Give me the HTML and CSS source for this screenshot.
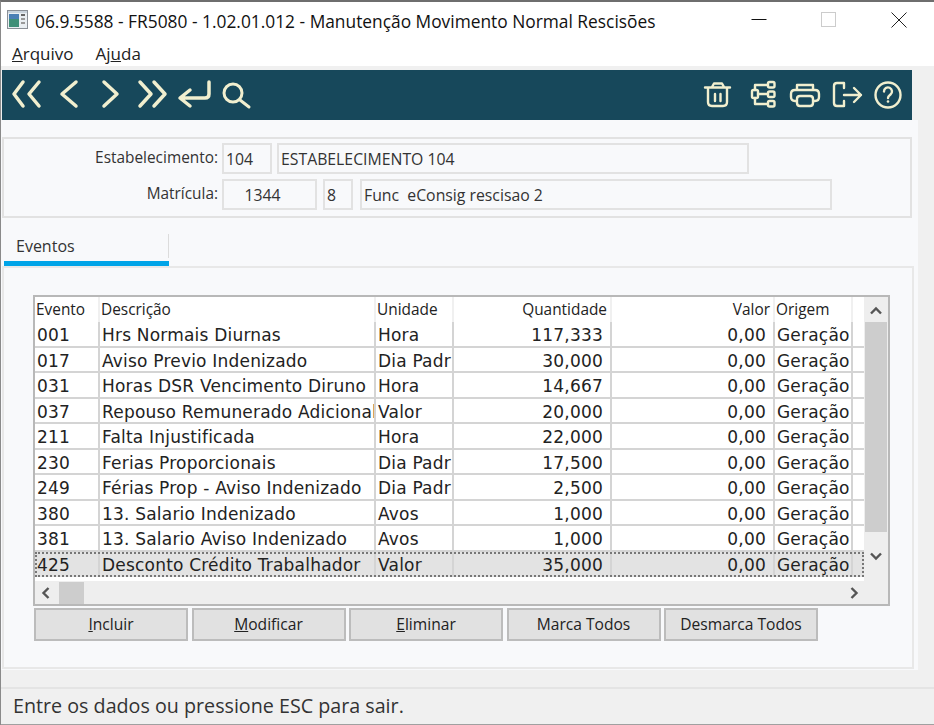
FILE: index.html
```html
<!DOCTYPE html>
<html lang="pt-BR">
<head>
<meta charset="utf-8">
<title>FR5080</title>
<link rel="stylesheet" href="styles.css">
</head>
<body>
<div class="window">
  <header class="titlebar">
    <svg class="app-icon" width="22" height="20" viewBox="0 0 22 20"><rect x="0.5" y="0.5" width="20" height="18" fill="#e9eef2" stroke="#8a8f96"/><rect x="1" y="1" width="19" height="2" fill="#c9d3dc"/><rect x="2" y="4" width="10" height="13" fill="#3f8f78"/><rect x="2" y="4" width="10" height="5" fill="#4a7fb5"/><rect x="14" y="4" width="4" height="2" fill="#666"/><rect x="14" y="8" width="4" height="2" fill="#999"/><rect x="14" y="12" width="4" height="2" fill="#999"/></svg>
    <span class="title">06.9.5588 - FR5080 - 1.02.01.012 - Manutenção Movimento Normal Rescisões</span>
    <div class="win-controls">
      <svg class="win-btn" width="16" height="16" viewBox="0 0 16 16"><path d="M0.5 7.5H15.5" stroke="#111"/></svg>
      <svg class="win-btn" width="16" height="16" viewBox="0 0 16 16"><rect x="0.5" y="0.5" width="14" height="14" fill="none" stroke="#ccc"/></svg>
      <svg class="win-btn" width="16" height="16" viewBox="0 0 16 16"><path d="M0.5 0.5L15.5 15.5M15.5 0.5L0.5 15.5" stroke="#222"/></svg>
    </div>
  </header>
  <nav class="menubar">
    <span class="menu-item"><u>A</u>rquivo</span>
    <span class="menu-item">Aj<u>u</u>da</span>
  </nav>
  <div class="toolbar">
    <div class="tool-group">
      <svg class="tool" viewBox="0 0 42 50"><path d="M17 12L8 24L17 36M33 12L23 24L33 36"/></svg>
      <svg class="tool" viewBox="0 0 42 50"><path d="M28 12L14 24L28 36"/></svg>
      <svg class="tool" viewBox="0 0 42 50"><path d="M14 12L27 24L14 36"/></svg>
      <svg class="tool" viewBox="0 0 42 50"><path d="M8 12L19 24L8 36M22 12L33 24L22 36"/></svg>
      <svg class="tool" viewBox="0 0 42 50"><path d="M35 12V24Q35 28 31 28H7M16 20L6 28L16 36"/></svg>
      <svg class="tool tool-search" viewBox="0 0 42 50"><circle cx="17" cy="23" r="9"/><path d="M24 30L33 37"/></svg>
    </div>
    <div class="tool-group">
      <svg class="tool tool-first" viewBox="0 0 42 50"><path class="thin" d="M9 17.5H34M16 17L18 13.5H26L28 17M12 18V32Q12 36 16 36H27Q31 36 31 32V18M19 24V31M24.500 24V31"/></svg>
      <svg class="tool" viewBox="0 0 42 50"><path class="thin" d="M13 20V15H26M16 24H26M13 28V34H26"/><rect class="thin" x="10" y="20" width="6" height="8" rx="1.500"/><rect class="thin" x="26" y="12" width="6.500" height="5.500" rx="1.500"/><rect class="thin" x="26" y="21.500" width="6.500" height="5.500" rx="1.500"/><rect class="thin" x="26" y="31" width="6.500" height="5.500" rx="1.500"/></svg>
      <svg class="tool" viewBox="0 0 42 50"><path class="thin" d="M13 20V15H29V20M13 31H11Q7 31 7 27V24Q7 20 11 20H31Q35 20 35 24V27Q35 31 31 31H29M13 29Q13 26 16 26H26Q29 26 29 29V33Q29 36 26 36H16Q13 36 13 33Z"/></svg>
      <svg class="tool" viewBox="0 0 42 50"><path class="thin" d="M18 18V13H11Q8 13 8 16V33Q8 36 11 36H18V31M18 25H35M28 18L35 25L28 32"/></svg>
      <svg class="tool" viewBox="0 0 42 50"><circle class="thin" cx="20" cy="25" r="12.500"/><path class="thin" d="M16 21.500A4 4 0 1 1 22.500 24.500C21 25.700 20 26.200 20 28"/><circle class="dot" cx="20" cy="31.500" r="1.300"/></svg>
    </div>
  </div>
  <main class="main">
    <section class="frame">
      <div class="field-row">
        <label class="field-label">Estabelecimento:</label>
        <div class="field f-estab">104</div>
        <div class="field f-estab-name">ESTABELECIMENTO 104</div>
      </div>
      <div class="field-row">
        <label class="field-label">Matrícula:</label>
        <div class="field f-mat">1344</div>
        <div class="field f-dig">8</div>
        <div class="field f-name">Func  eConsig rescisao 2</div>
      </div>
    </section>
    <div class="tabs"><div class="tab">Eventos</div></div>
    <section class="panel">
      <div class="grid">
        <div class="grid-body">
          <div class="row head">
            <div>Evento</div><div>Descrição</div><div>Unidade</div><div class="num">Quantidade</div><div class="num">Valor</div><div>Origem</div>
          </div>
          <div class="row"><div>001</div><div>Hrs Normais Diurnas</div><div>Hora</div><div class="num">117,333</div><div class="num">0,00</div><div>Geração</div></div>
          <div class="row"><div>017</div><div>Aviso Previo Indenizado</div><div>Dia Padr</div><div class="num">30,000</div><div class="num">0,00</div><div>Geração</div></div>
          <div class="row"><div>031</div><div>Horas DSR Vencimento Diruno</div><div>Hora</div><div class="num">14,667</div><div class="num">0,00</div><div>Geração</div></div>
          <div class="row"><div>037</div><div>Repouso Remunerado Adicional</div><div>Valor</div><div class="num">20,000</div><div class="num">0,00</div><div>Geração</div></div>
          <div class="row"><div>211</div><div>Falta Injustificada</div><div>Hora</div><div class="num">22,000</div><div class="num">0,00</div><div>Geração</div></div>
          <div class="row"><div>230</div><div>Ferias Proporcionais</div><div>Dia Padr</div><div class="num">17,500</div><div class="num">0,00</div><div>Geração</div></div>
          <div class="row"><div>249</div><div>Férias Prop - Aviso Indenizado</div><div>Dia Padr</div><div class="num">2,500</div><div class="num">0,00</div><div>Geração</div></div>
          <div class="row"><div>380</div><div>13. Salario Indenizado</div><div>Avos</div><div class="num">1,000</div><div class="num">0,00</div><div>Geração</div></div>
          <div class="row"><div>381</div><div>13. Salario Aviso Indenizado</div><div>Avos</div><div class="num">1,000</div><div class="num">0,00</div><div>Geração</div></div>
          <div class="row selected"><div>425</div><div>Desconto Crédito Trabalhador</div><div>Valor</div><div class="num">35,000</div><div class="num">0,00</div><div>Geração</div></div>
        </div>
        <div class="vscroll">
          <svg class="arrow" width="14" height="10" viewBox="0 0 14 10"><path d="M2 7.500L7 2.500L12 7.500"/></svg>
          <div class="vthumb-track"><div class="vthumb"></div></div>
          <svg class="arrow" width="14" height="10" viewBox="0 0 14 10"><path d="M2 2.500L7 7.500L12 2.500"/></svg>
        </div>
        <div class="hscroll">
          <svg class="arrow" width="10" height="14" viewBox="0 0 10 14"><path d="M7.500 2L2.500 7L7.500 12"/></svg>
          <div class="hthumb"></div>
          <svg class="arrow arrow-right" width="10" height="14" viewBox="0 0 10 14"><path d="M2.500 2L7.500 7L2.500 12"/></svg>
        </div>
        <div class="corner"></div>
      </div>
      <div class="buttons">
        <button class="btn"><u>I</u>ncluir</button>
        <button class="btn"><u>M</u>odificar</button>
        <button class="btn"><u>E</u>liminar</button>
        <button class="btn">Marca Todos</button>
        <button class="btn">Desmarca Todos</button>
      </div>
    </section>
  </main>
  <footer class="statusbar">Entre os dados ou pressione ESC para sair.</footer>
</div>
</body>
</html>
```
FILE: styles.css
```css
* { box-sizing: border-box; }
html, body { margin: 0; height: 100%; }
body { background: #f0f0f0; overflow: hidden; font-family: "Open Sans", "Noto Sans", sans-serif; color: #222; }
.window { width: 934px; height: 725px; display: flex; flex-direction: column; border-top: 2px solid #6e6e6e; border-left: 1px solid #8a8a8a; }

.titlebar { height: 35px; flex: none; background: #fff; display: flex; align-items: center; padding-left: 6px; }
.app-icon { flex: none; margin-right: 6px; }
.title { font-size: 17.350px; padding-top: 2px; color: #111; white-space: nowrap; }
.win-controls { margin-left: auto; display: flex; margin-right: 27px; gap: 54px; }
.menubar { height: 29px; flex: none; background: #fff; display: flex; align-items: center; padding: 3px 0 0 11px; gap: 22px; font-size: 17px; color: #222; }

.toolbar { flex: none; height: 50px; width: 910px; margin: 4px 0 0 1px; background: #17485b; display: flex; justify-content: space-between; padding: 0 2px 0 4px; }
.tool-group { display: flex; }
.tool { width: 42px; height: 50px; fill: none; stroke: #f1efcf; stroke-width: 3.500; stroke-linecap: round; stroke-linejoin: round; flex: none; }
.tool-search { stroke-width: 3; }
.tool-first { margin-right: 4px; }
.tool .thin { stroke-width: 2.400; }
.tool .dot { fill: #f1efcf; stroke: none; }

.main { width: 917px; height: 550px; flex: none; background: #f8f9fb; padding: 17px 0 0 1px; }
.frame { width: 910px; height: 81px; border: 2px solid #e2e2e2; padding: 4px 0 0 0; display: flex; flex-direction: column; gap: 5px; }
.field-row { display: flex; height: 31px; font-size: 15.400px; }
.field-label { width: 214px; padding-top: 4px; text-align: right; margin-right: 4px; color: #333; }
.field { border: 2px solid #e2e2e2; display: flex; align-items: center; padding: 0 2px; margin-right: 5px; color: #333; white-space: pre; font-size: 15.800px; }
.f-estab { width: 50px; }
.f-estab-name { width: 472px; }
.f-mat { width: 95px; justify-content: center; padding-right: 16px; margin-right: 6px; }
.f-dig { width: 30px; margin-right: 7px; }
.f-name { width: 472px; }

.tabs { height: 48px; display: flex; align-items: flex-end; padding-left: 2px; }
.tab { width: 165px; height: 32px; border-bottom: 5px solid #00a4e8; font-size: 16px; padding: 1px 0 0 12px; position: relative; color: #333; }
.tab::after { content: ""; position: absolute; right: 0; top: 0; width: 1px; height: 24px; background: #dcdcdc; }

.panel { width: 912px; height: 403px; border: 2px solid #e8e8e8; padding: 27px 0 0 29px; }
.grid { width: 857px; height: 311px; border: 2px solid #b8b8b8; display: grid; grid-template-columns: 829px 24px; grid-template-rows: 284px 23px; background: #eee; }
.grid-body { background: #fff; overflow: hidden; font-family: "DejaVu Sans", sans-serif; }
.row { display: grid; grid-template-columns: 65px 276px 78px 158px 163px 78px 11px; height: 25.500px; font-size: 17px; letter-spacing: 0.200px; line-height: 27px; border-bottom: 2px solid #d4d4d4; color: #222; }
.row > div { padding: 0 0 0 2px; border-right: 2px solid #d4d4d4; white-space: nowrap; overflow: hidden; }
.row > .num { text-align: right; padding-right: 7px; }
.row.head { height: 25px; border-bottom: 0; font-family: "Open Sans", sans-serif; font-size: 15.400px; letter-spacing: 0; line-height: 25px; }
.row.head > div { border-right-color: #f0f0f0; padding-left: 1px; }
.row.head > .num { padding-right: 3px; }
.row.selected { background: #e3e3e3; outline: 2px dotted #777; outline-offset: -2px; border-bottom: 0; }

.vscroll { grid-row: 1; grid-column: 2; display: flex; flex-direction: column; align-items: center; padding-top: 9px; }
.vthumb-track { height: 235px; width: 100%; padding: 6px 1px 0; }
.vthumb { height: 210px; background: #cdcdcd; }
.vscroll .arrow { flex: none; }
.hscroll { grid-row: 2; grid-column: 1; display: flex; align-items: center; padding-left: 6px; }
.hthumb { width: 25px; height: 22px; background: #cdcdcd; margin-left: 8px; }
.arrow { fill: none; stroke: #555; stroke-width: 2.400; }
.arrow-right { margin-left: auto; margin-right: 5px; }
.corner { grid-row: 2; grid-column: 2; }

.buttons { display: flex; gap: 3.500px; margin: 2px 0 0 1px; }
.btn { width: 154px; height: 33px; background: #e1e1e1; border: 2px solid #bcbcbc; font-family: "Open Sans", sans-serif; font-size: 15.600px; color: #222; padding: 0 0 2px; }

.statusbar { margin-top: 17px; flex: 1; border-top: 2px solid #e4e4e4; border-bottom: 1px solid #a0a0a0; font-size: 19.700px; padding: 3px 0 0 12px; color: #333; }
```
